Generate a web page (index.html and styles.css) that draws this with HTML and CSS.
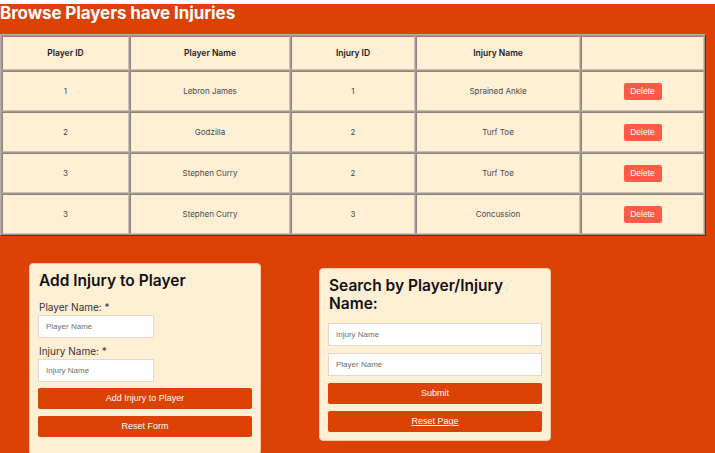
FILE: index.html
```html
<!DOCTYPE html>
<html>
<head>
<meta charset="utf-8">
<link rel="stylesheet" href="styles.css">
</head>
<body>
<div class="page">
  <h1 class="title">Browse Players have Injuries</h1>
  <table class="data">
    <thead>
      <tr>
        <th class="c1">Player ID</th>
        <th class="c2">Player Name</th>
        <th class="c3">Injury ID</th>
        <th class="c4">Injury Name</th>
        <th class="c5"></th>
      </tr>
    </thead>
    <tbody>
      <tr><td>1</td><td>Lebron James</td><td>1</td><td>Sprained Ankle</td><td><button class="del">Delete</button></td></tr>
      <tr><td>2</td><td>Godzilla</td><td>2</td><td>Turf Toe</td><td><button class="del">Delete</button></td></tr>
      <tr><td>3</td><td>Stephen Curry</td><td>2</td><td>Turf Toe</td><td><button class="del">Delete</button></td></tr>
      <tr><td>3</td><td>Stephen Curry</td><td>3</td><td>Concussion</td><td><button class="del">Delete</button></td></tr>
    </tbody>
  </table>

  <div class="forms">
    <form class="card card-add">
      <h2 class="card-title">Add Injury to Player</h2>
      <label class="lbl">Player Name: *</label>
      <input class="inp inp-short" type="text" placeholder="Player Name">
      <label class="lbl">Injury Name: *</label>
      <input class="inp inp-short" type="text" placeholder="Injury Name">
      <button class="btn" type="button">Add Injury to Player</button>
      <button class="btn" type="button">Reset Form</button>
    </form>
    <form class="card card-search">
      <h2 class="card-title">Search by Player/Injury Name:</h2>
      <input class="inp" type="text" placeholder="Injury Name">
      <input class="inp" type="text" placeholder="Player Name">
      <button class="btn" type="button">Submit</button>
      <a class="btn link" href="#">Reset Page</a>
    </form>
  </div>
</div>
</body>
</html>
```

FILE: styles.css
```css
html, body {
  margin: 0;
  padding: 0;
  background: #ffffff;
}

.page {
  margin-top: 4px;
  background: #dc4105;
  height: 449px;
  font-family: "Inter", "Liberation Sans", sans-serif;
}

.title {
  margin: 0;
  padding: 0;
  height: 30px;
  color: #ffffff;
  font-size: 17px;
  font-weight: 700;
  line-height: 18px;
  letter-spacing: -0.1px;
}

.data {
  width: 706px;
  margin-top: 0;
  border-collapse: separate;
  border-spacing: 1px;
  background: #a39a8f;
  border: 1px solid;
  border-color: #b7afa3 #3c3a38 #3c3a38 #b7afa3;
}

.data th,
.data td {
  background: #ffefd5;
  border: 1px solid;
  border-color: #8d857b #c9c0b3 #c9c0b3 #8d857b;
  text-align: center;
  padding: 0;
}

.data th {
  height: 32px;
  font-size: 8.5px;
  font-weight: 600;
  color: #1a1a1a;
}

.data td {
  height: 38px;
  font-size: 8px;
  color: #4a4a4a;
}

.c1 { width: 125px; }
.c2 { width: 158px; }
.c3 { width: 122px; }
.c4 { width: 162px; }
.c5 { width: auto; }

.del {
  background: #ff5a45;
  color: #ffffff;
  border: none;
  border-radius: 2px;
  width: 38px;
  height: 17px;
  padding: 0;
  font-family: "Liberation Sans", Arial, sans-serif;
  font-size: 8.5px;
}

.forms {
  display: flex;
  align-items: flex-start;
  gap: 58px;
  padding-left: 29px;
  margin-top: 27px;
}

.card {
  display: flex;
  flex-direction: column;
  width: 214px;
  padding: 8px 8px 1px 8px;
  background: #ffefd5;
  border: 1px solid #f3c9a8;
  border-radius: 4px;
  margin: 0;
}

.card-add {
  padding-bottom: 10px;
}

.card-search {
  margin-top: 5px;
}

.card-title {
  margin: 0 0 10px 1px;
  font-size: 15.5px;
  font-weight: 600;
  line-height: 18px;
  color: #111111;
}

.card-search .card-title {
  margin-bottom: 10px;
}

.lbl {
  font-size: 10px;
  color: #333333;
  margin: 1px 0 2px 1px;
  line-height: 12px;
}

.inp {
  box-sizing: border-box;
  height: 23px;
  border: 1px solid #e2d9cc;
  background: #ffffff;
  font-family: "Liberation Sans", Arial, sans-serif;
  font-size: 8px;
  padding: 0 7px;
  margin: 0 0 7px 0;
  outline: none;
}

.inp-short {
  width: 116px;
  margin-bottom: 6px;
}

.inp::placeholder {
  color: #6e6e6e;
}

.btn {
  box-sizing: border-box;
  display: block;
  height: 21px;
  line-height: 21px;
  background: #dc4105;
  color: #ffffff;
  border: none;
  border-radius: 2px;
  font-family: "Liberation Sans", Arial, sans-serif;
  font-size: 9px;
  text-align: center;
  padding: 0;
  margin: 0 0 7px 0;
}

.link {
  text-decoration: underline;
}
```
